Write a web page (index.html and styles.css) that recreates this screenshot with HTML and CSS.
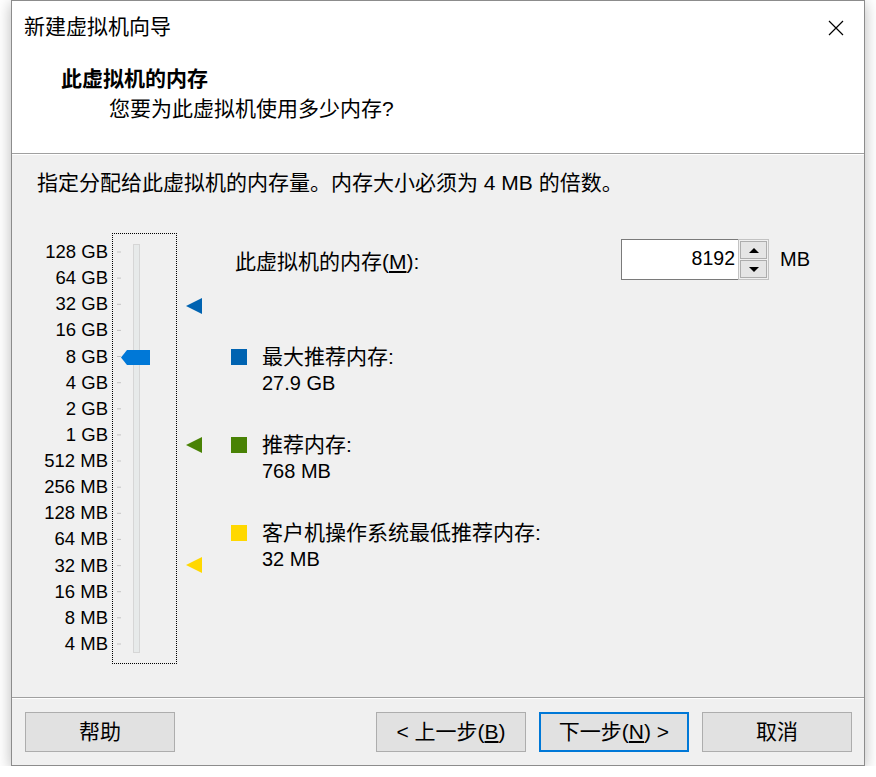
FILE: index.html
```html
<!DOCTYPE html>
<html lang="zh-CN">
<head>
    <meta charset="UTF-8">
    <title>新建虚拟机向导</title>
    <link rel="stylesheet" href="styles.css">
</head>
<body>
    <div class="window">
        <div class="top">
            <div class="titlebar">
                <span class="title">新建虚拟机向导</span>
                <svg class="close" width="16" height="16" viewBox="0 0 16 16">
                    <path d="M1 1 L15 15 M15 1 L1 15" stroke="#000" stroke-width="1.2" fill="none"/>
                </svg>
            </div>
            <h1>此虚拟机的内存</h1>
            <p class="subtitle">您要为此虚拟机使用多少内存?</p>
        </div>

        <div class="content">
            <p class="hint">指定分配给此虚拟机的内存量。内存大小必须为 4 MB 的倍数。</p>

            <div class="memory">
                <ul class="scale">
                    <li>128 GB</li>
                    <li>64 GB</li>
                    <li>32 GB</li>
                    <li>16 GB</li>
                    <li>8 GB</li>
                    <li>4 GB</li>
                    <li>2 GB</li>
                    <li>1 GB</li>
                    <li>512 MB</li>
                    <li>256 MB</li>
                    <li>128 MB</li>
                    <li>64 MB</li>
                    <li>32 MB</li>
                    <li>16 MB</li>
                    <li>8 MB</li>
                    <li>4 MB</li>
                </ul>

                <div class="slider">
                    <svg width="63" height="429" viewBox="0 0 63 429">
                        <g fill="#c4c4c4">
                            <rect x="4" y="17.5" width="4" height="1"/>
                            <rect x="4" y="43.6" width="4" height="1"/>
                            <rect x="4" y="69.8" width="4" height="1"/>
                            <rect x="4" y="95.9" width="4" height="1"/>
                            <rect x="4" y="122" width="4" height="1"/>
                            <rect x="4" y="148.2" width="4" height="1"/>
                            <rect x="4" y="174.3" width="4" height="1"/>
                            <rect x="4" y="200.4" width="4" height="1"/>
                            <rect x="4" y="226.5" width="4" height="1"/>
                            <rect x="4" y="252.7" width="4" height="1"/>
                            <rect x="4" y="278.8" width="4" height="1"/>
                            <rect x="4" y="304.9" width="4" height="1"/>
                            <rect x="4" y="331.1" width="4" height="1"/>
                            <rect x="4" y="357.2" width="4" height="1"/>
                            <rect x="4" y="383.3" width="4" height="1"/>
                            <rect x="4" y="409.5" width="4" height="1"/>
                        </g>
                        <rect x="20.5" y="10.5" width="6" height="408" fill="#e7eaea" stroke="#d6d6d6"/>
                        <polygon points="8,123.5 14,116 37,116 37,131 14,131" fill="#0078d7"/>
                    </svg>
                </div>

                <div class="markers">
                    <svg class="marker" style="top: 65px" width="16" height="16" viewBox="0 0 16 16"><polygon points="0,8 16,0 16,16" fill="#0063b1"/></svg>
                    <svg class="marker" style="top: 204px" width="16" height="16" viewBox="0 0 16 16"><polygon points="0,8 16,0 16,16" fill="#498205"/></svg>
                    <svg class="marker" style="top: 324px" width="16" height="16" viewBox="0 0 16 16"><polygon points="0,8 16,0 16,16" fill="#ffd800"/></svg>
                </div>

                <div class="details">
                    <div class="mem-row">
                        <span class="mem-label">此虚拟机的内存(<u>M</u>):</span>
                        <div class="spin">
                            <span class="spin-value">8192</span>
                            <div class="spin-buttons">
                                <span class="spin-btn"><i class="arrow up"></i></span>
                                <span class="spin-btn"><i class="arrow down"></i></span>
                            </div>
                        </div>
                        <span class="unit">MB</span>
                    </div>

                    <div class="legend">
                        <div class="legend-item">
                            <span class="swatch blue"></span>
                            <div>
                                <div class="legend-title">最大推荐内存:</div>
                                <div class="legend-value">27.9 GB</div>
                            </div>
                        </div>
                        <div class="legend-item">
                            <span class="swatch green"></span>
                            <div>
                                <div class="legend-title">推荐内存:</div>
                                <div class="legend-value">768 MB</div>
                            </div>
                        </div>
                        <div class="legend-item">
                            <span class="swatch yellow"></span>
                            <div>
                                <div class="legend-title">客户机操作系统最低推荐内存:</div>
                                <div class="legend-value">32 MB</div>
                            </div>
                        </div>
                    </div>
                </div>
            </div>
        </div>

        <div class="footer">
            <button>帮助</button>
            <span class="spacer"></span>
            <button>&lt; 上一步(<u>B</u>)</button>
            <button class="default">下一步(<u>N</u>) &gt;</button>
            <button>取消</button>
        </div>
    </div>
</body>
</html>
```

FILE: styles.css
```css
body {
    margin: 0;
    background-color: #fff;
    font-family: "Liberation Sans", "Noto Sans CJK SC", sans-serif;
    font-size: 21px;
    color: #000;
}
.window {
    box-sizing: border-box;
    width: 854px;
    height: 766px;
    margin-left: 11px;
    border: 1px solid #8c8c8c;
    background-color: #f0f0f0;
    box-shadow: 0 3px 14px rgba(0, 0, 0, 0.28);
    display: flex;
    flex-direction: column;
}
.top {
    height: 152px;
    background-color: #fff;
    border-bottom: 1px solid #a0a0a0;
}
.titlebar {
    height: 52px;
    display: flex;
    align-items: center;
    justify-content: space-between;
    padding: 0 20px 0 12px;
}
.title {
    font-size: 21px;
    line-height: 52px;
}
.close {
    display: block;
    margin-top: 1px;
}
h1 {
    margin: 11px 0 0 49px;
    font-size: 21px;
    font-weight: bold;
    line-height: 30px;
}
.subtitle {
    margin: 0 0 0 97px;
    line-height: 30px;
}
.content {
    flex: 1;
    border-top: 1px solid #fff;
    padding: 13px 0 0 25px;
}
.hint {
    margin: 0;
    line-height: 30px;
}
.memory {
    display: flex;
    align-items: flex-start;
    margin-top: 35px;
}
.scale {
    list-style: none;
    margin: 0 4px 0 0;
    padding: 6px 0 0;
    width: 71px;
    text-align: right;
    font-size: 18.5px;
}
.scale li {
    height: 26.13px;
    line-height: 26.13px;
    white-space: nowrap;
}
.slider {
    width: 63px;
    height: 429px;
    border: 1px dotted #000;
}
.slider svg {
    display: block;
}
.markers {
    position: relative;
    width: 16px;
    height: 431px;
    margin-left: 9px;
}
.marker {
    position: absolute;
    left: 0;
    display: block;
}
.details {
    margin-left: 29px;
    padding-top: 6px;
}
.mem-row {
    display: flex;
    align-items: center;
    height: 41px;
}
.mem-label {
    box-sizing: border-box;
    width: 390px;
    padding-left: 4px;
    white-space: nowrap;
}
.spin {
    display: flex;
    height: 41px;
}
.spin-value {
    box-sizing: border-box;
    width: 117px;
    height: 41px;
    border: 1px solid #7a7a7a;
    border-right: none;
    background-color: #fff;
    text-align: right;
    padding-right: 3px;
    font-size: 19.5px;
    line-height: 37px;
}
.spin-buttons {
    box-sizing: border-box;
    width: 31px;
    border: 1px solid #c2c2c2;
    padding: 1px;
    display: flex;
    flex-direction: column;
    gap: 1px;
    background-color: #f0f0f0;
}
.spin-btn {
    flex: 1;
    border: 1px solid #adadad;
    background-color: #e5e5e5;
    display: flex;
    align-items: center;
    justify-content: center;
}
.arrow {
    width: 0;
    height: 0;
    border-left: 5px solid transparent;
    border-right: 5px solid transparent;
}
.arrow.up {
    border-bottom: 5px solid #000;
}
.arrow.down {
    border-top: 5px solid #000;
}
.unit {
    margin-left: 11px;
    font-size: 20px;
}
.legend {
    margin-top: 63px;
    display: flex;
    flex-direction: column;
    gap: 34px;
}
.legend-item {
    display: flex;
    align-items: flex-start;
}
.swatch {
    width: 16px;
    height: 16px;
    margin: 6px 15px 0 0;
}
.swatch.blue {
    background-color: #0063b1;
}
.swatch.green {
    background-color: #498205;
}
.swatch.yellow {
    background-color: #ffd800;
}
.legend-title {
    line-height: 27px;
    white-space: nowrap;
}
.legend-value {
    line-height: 27px;
    font-size: 20px;
}
.footer {
    box-sizing: border-box;
    height: 68px;
    border-top: 1px solid #a0a0a0;
    box-shadow: inset 0 1px 0 #fff;
    display: flex;
    align-items: flex-start;
    gap: 13px;
    padding: 14px 12px 0 13px;
}
.footer .spacer {
    flex: 1;
}
.footer button {
    box-sizing: border-box;
    width: 150px;
    height: 40px;
    border: 1px solid #adadad;
    background-color: #e1e1e1;
    font-family: "Liberation Sans", "Noto Sans CJK SC", sans-serif;
    font-size: 21px;
    color: #000;
    padding: 0;
    line-height: 36px;
}
.footer button.default {
    border: 2px solid #0078d7;
}
```
